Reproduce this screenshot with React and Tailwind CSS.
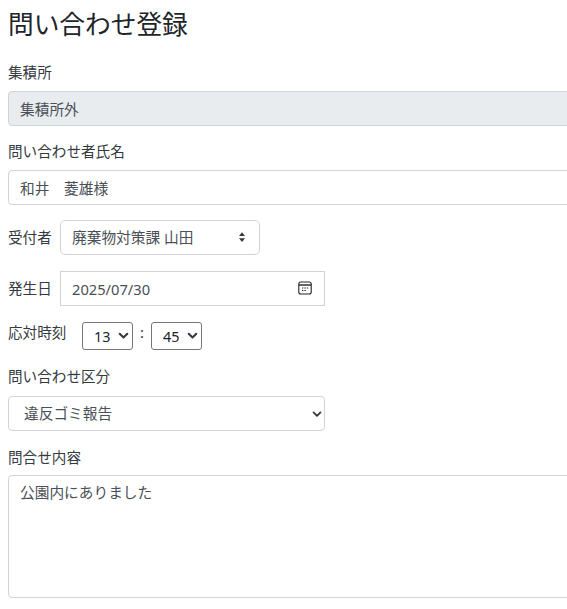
import React from "react";

const font = "font-['Noto_Sans','Noto_Sans_CJK_JP',sans-serif]";
const control =
  "block h-[35px] border border-[#ced4da] px-[11px] text-[14.7px] text-[#495057] outline-none";

const Updown = () => (
  <svg className="absolute right-[12px] top-[11px] h-3 w-3" viewBox="0 0 16 16" fill="#343a40">
    <path d="M8 1.5 12 6.5H4zM8 14.5 4 9.5h8z" />
  </svg>
);

const Chevron = ({ className }) => (
  <svg className={className} viewBox="0 0 16 16" fill="none" stroke="#343a40" strokeWidth="3" strokeLinecap="round" strokeLinejoin="round">
    <path d="m2.5 5.5 5.5 5.5 5.5-5.5" />
  </svg>
);

const CalendarIcon = () => (
  <svg className="absolute right-[13px] top-[10px] h-[14px] w-[14px]" viewBox="0 0 14 14" fill="none" stroke="#212529">
    <rect x="0.8" y="1" width="12.4" height="12" rx="2" strokeWidth="1.1" />
    <path d="M1 4h12" strokeWidth="1.4" />
    <path d="M4 7h1.4M6.4 7h1.4M8.8 7h1.4M4 9.5h1.4M6.4 9.5h1.4" strokeWidth="1.2" />
  </svg>
);

const TimeSelect = ({ value, options }) => (
  <div className="relative h-[28px] w-[51px]">
    <select
      defaultValue={value}
      className="h-full w-full appearance-none rounded-[3px] border border-[#767676] bg-white pt-[2px] pl-[11px] text-[14.4px] text-[#212529] outline-none"
    >
      {options.map((o) => (
        <option key={o}>{o}</option>
      ))}
    </select>
    <Chevron className="pointer-events-none absolute right-[4px] top-[8px] h-[11px] w-[11px]" />
  </div>
);

export default function App() {
  return (
    <div className={`${font} h-[609px] w-[567px] overflow-hidden bg-white pl-2 text-[14.6px] text-[#343a40]`}>
      <h1 className="pt-[8px] text-[25.7px] leading-[34px] font-normal text-[#212529]">問い合わせ登録</h1>

      <label className="mt-[20px] block leading-[20px]">集積所</label>
      <input
        readOnly
        value="集積所外"
        className={`${control} mt-[9px] w-[600px] rounded-[4px] bg-[#e9ecef]`}
      />

      <label className="mt-[15px] block leading-[20px]">問い合わせ者氏名</label>
      <input readOnly value="和井　菱雄様" className={`${control} mt-[9px] w-[600px] rounded-[4px] bg-white`} />

      <div className="mt-[15px] flex items-center">
        <label className="w-[52px]">受付者</label>
        <div className="relative w-[200px]">
          <select defaultValue="廃棄物対策課 山田" className={`${control} w-full appearance-none rounded-[5px] bg-white`}>
            <option>廃棄物対策課 山田</option>
          </select>
          <Updown />
        </div>
      </div>

      <div className="mt-[16px] flex items-center">
        <label className="w-[52px]">発生日</label>
        <div className="relative w-[265px]">
          <input readOnly value="2025/07/30" className={`${control} w-full bg-white`} />
          <CalendarIcon />
        </div>
      </div>

      <div className="mt-[16px] flex h-[28px]">
        <label className="w-[74px] leading-[21px]">応対時刻</label>
        <TimeSelect value="13" options={["13"]} />
        <span className="w-[18px] text-center leading-[21px]">:</span>
        <TimeSelect value="45" options={["45"]} />
      </div>

      <label className="mt-[16px] block leading-[20px]">問い合わせ区分</label>
      <div className="relative mt-[10px] w-[317px]">
        <select defaultValue="違反ゴミ報告" className={`${control} w-full appearance-none rounded-[4px] bg-white pl-[15px]`}>
          <option>違反ゴミ報告</option>
        </select>
        <Chevron className="pointer-events-none absolute right-[3px] top-[13px] h-[10px] w-[10px]" />
      </div>

      <label className="mt-[16px] block leading-[20px]">問合せ内容</label>
      <textarea
        readOnly
        value="公園内にありました"
        className="mt-[8px] block h-[123px] w-[600px] resize-none rounded-[4px] border border-[#ced4da] px-[11px] py-[5px] text-[14.7px] leading-[22px] text-[#495057] outline-none"
      />
    </div>
  );
}
